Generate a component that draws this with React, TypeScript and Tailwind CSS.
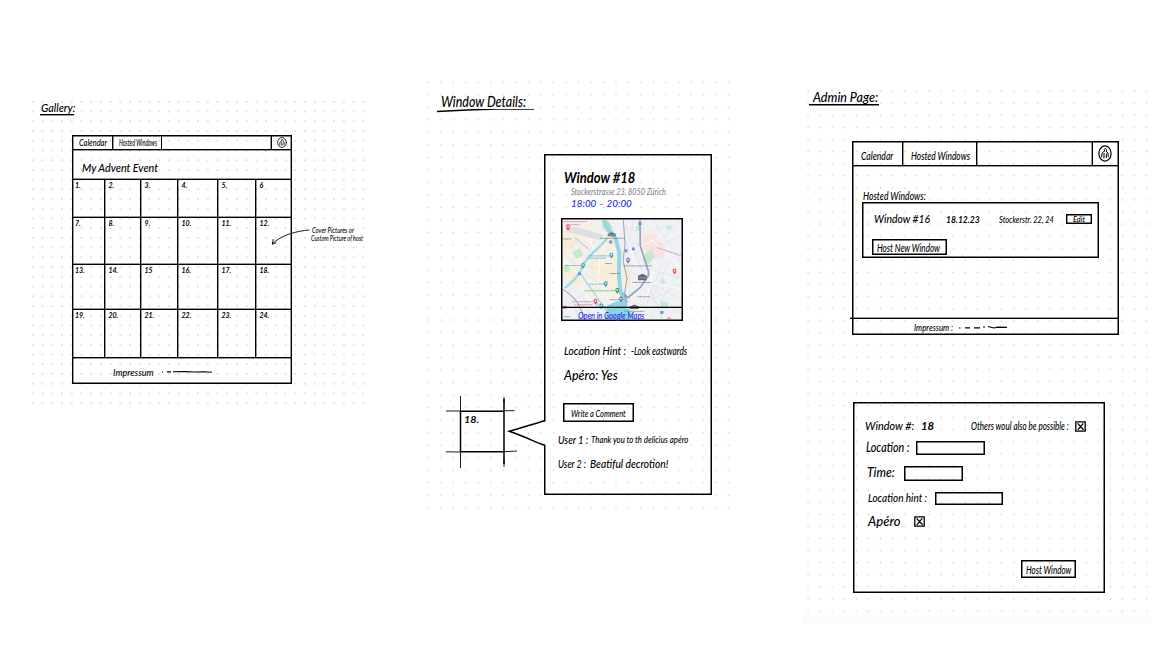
import { useLayoutEffect, useRef, type ReactNode } from "react";

/* One handwritten phrase, stretched to fill the width of its box. */
function Ink({ className, children }: { className: string; children: ReactNode }) {
  const box = useRef<HTMLSpanElement>(null);
  const text = useRef<HTMLSpanElement>(null);
  useLayoutEffect(() => {
    if (!box.current || !text.current) return;
    const ratio = box.current.clientWidth / text.current.offsetWidth;
    text.current.style.transform = `scaleX(${ratio})`;
  }, []);
  return (
    <span ref={box} className={`block shrink-0 whitespace-nowrap leading-none ${className}`}>
      <span ref={text} className="inline-block origin-left align-top">
        {children}
      </span>
    </span>
  );
}

function Avatar({ className }: { className: string }) {
  return (
    <svg viewBox="0 0 14 17" preserveAspectRatio="none" className={className} fill="none" stroke="#000" strokeWidth="1.2" strokeLinecap="round">
      <ellipse cx="7" cy="8.5" rx="6.1" ry="7.6" />
      <path d="M3.7 11.8 4 8.2 5.6 6.8 6.4 6.6V4.4L7.4 3.2 8.5 4.4V6.8L10 8 10.2 11.5M6 8.4V13M8.4 9V12.6" strokeWidth="1" />
    </svg>
  );
}

function Checked({ className }: { className: string }) {
  return (
    <svg viewBox="0 0 11 11" className={className} fill="none" stroke="#000" strokeWidth="1.3">
      <path d="M.8.9H10.2V10.1H.8ZM2.6 2.4 8.6 8.8M8.3 2.3 2.8 8.8" />
    </svg>
  );
}

const days = [
  ["1.", "2.", "3.", "4.", "5.", "6"],
  ["7.", "8.", "9.", "10.", "11.", "12."],
  ["13.", "14.", "15", "16.", "17.", "18."],
  ["19.", "20.", "21.", "22.", "23.", "24."],
];

function Gallery() {
  return (
    <section className="relative ml-[28px] mt-[97px] h-[309px] w-[341px] shrink-0 bg-[radial-gradient(circle,#d2d2d2_0.5px,transparent_1px)] bg-[size:9.73px_9.73px] pl-[12px] pt-[4px]">
      <h2 className="h-[14px] w-[34px] border-b border-black shadow-[0_0.4px_0_#000]">
        <Ink className="ml-px w-[34px] pt-px text-[12px]">Gallery:</Ink>
      </h2>
      <div className="ml-[32px] mt-[20px] flex h-[249px] w-[220px] flex-col border border-black shadow-[inset_0_0_0_0.4px_#000]">
        <header className="flex h-[14px] shrink-0 items-stretch border-b border-black text-[8.5px] shadow-[0_0.4px_0_#000]">
          <div className="flex w-[40px] items-center border-r border-black pl-[6px] pt-px shadow-[0.4px_0_0_#000]">
            <Ink className="w-[28px]">Calendar</Ink>
          </div>
          <div className="flex w-[49px] items-center border-r border-black pl-[6px] pt-px">
            <Ink className="w-[38px]">Hosted Windows</Ink>
          </div>
          <div className="flex-1" />
          <div className="flex w-[20px] items-center justify-center border-l border-black shadow-[-0.4px_0_0_#000]">
            <Avatar className="h-[11px] w-[10px]" />
          </div>
        </header>
        <div className="flex h-[29px] shrink-0 items-center pl-[9px] pt-[7px]">
          <Ink className="w-[76px] text-[12px]">My Advent Event</Ink>
        </div>
        <div className="grid h-[179px] shrink-0 grid-cols-[32px_36px_37px_40px_38px_35px] grid-rows-[38px_47px_45px_48px] border-b border-black shadow-[0_0.4px_0_#000]">
          {days.flatMap((week, r) =>
            week.map((day, c) => (
              <div
                key={day}
                className={`border-t border-black pt-[2px] text-[7px] font-bold leading-none shadow-[0.4px_-0.4px_0_#000] ${c < 5 ? "border-r" : ""} ${c === 0 ? "pl-[2px]" : "pl-[3.5px]"}`}
              >
                {day}
              </div>
            )),
          )}
        </div>
        <footer className="flex flex-1 items-center pl-[40px] pt-[3px]">
          <Ink className="w-[41px] text-[9px]">Impressum</Ink>
          <svg className="ml-[8px] h-[4px] w-[51px]" viewBox="0 0 51 4" fill="none" stroke="#000" strokeWidth="1.1">
            <path d="M0 2.3h1M5 1.9h4M11 1.8 23 1.6 33 2 42 1.7 50 2.2" />
          </svg>
        </footer>
      </div>
      <div className="absolute left-[283px] top-[130px] text-[7.5px]">
        <Ink className="ml-[1px] w-[42px]">Cover Pictures or</Ink>
        <Ink className="w-[52px]">Custom Picture of host</Ink>
      </div>
      <svg className="absolute left-[243px] top-[131px] h-[18px] w-[40px]" viewBox="0 0 40 18" fill="none" stroke="#000" strokeWidth=".9" strokeLinecap="round">
        <path d="M38 2C26 3 10 7 1.6 15.6M2.2 11.5 1.3 16.2 5 14.8" />
      </svg>
    </section>
  );
}

function CityMap() {
  return (
    <svg viewBox="57 47 348 298" preserveAspectRatio="none" className="h-full w-full" fill="none">
      <rect x="57" y="47" width="348" height="298" fill="#f0f1f5" />
      <path d="M57 47h122l40 60 4 180-90 0-76-100Z" fill="#f4f1ea" />
      <path d="M57 82 84 74 120 95 57 150ZM170 170 218 152 217 245 180 232ZM128 178 166 165 190 220 150 230ZM57 180 92 190 110 232 88 250 57 216ZM232 180 262 198 258 248 236 254ZM180 105 214 98 216 128 184 132Z" fill="#f9efd8" />
      <path d="M66 71 100 68 178 92 168 108 66 82Z" fill="#dedfe3" />
      <path d="M295 95 330 88 362 140 350 164 318 158 288 128Z" fill="#fae3df" />
      <path d="M177 50 205 76 200 92 172 72ZM84 144 106 132 118 152 96 164ZM299 146 320 136 328 158 306 184 292 170ZM269 68 284 62 290 74 276 80ZM362 66 376 64 378 74 364 76ZM345 230 352 222 360 236 350 242ZM346 290 368 296 364 316 342 308ZM58 188 72 180 78 198 62 206ZM155 290 170 302 152 310Z" fill="#c4e9ce" />
      <g stroke="#d3d7e0" strokeWidth="1.3">
        <path d="M57 110 140 170M70 100 156 146M57 145 126 210M98 100 74 142M145 50 110 88M200 130 130 190M120 210 202 258M60 230 140 305M70 300 155 250M90 330 190 230M110 180 210 212M150 110 120 180M104 345 75 260M140 345 118 280" />
        <path d="M245 48 256 345M265 50 240 165M300 50 268 170M325 50 405 170M230 110 405 150M242 180 405 220M252 200 405 285M290 250 375 345M350 180 285 345M405 200 310 345M380 155 320 280M302 230 405 330M260 120 350 345M260 320 405 240M330 130 405 95M400 50 350 105M315 80 380 60M230 70 280 80" />
      </g>
      <g stroke="#fff" strokeWidth="2.4">
        <path d="M57 165 125 230 190 250M132 100 166 170 160 250M110 245 155 310M275 225 405 255M310 100 405 190M330 170 290 340M248 150 345 95M245 100 275 190" />
      </g>
      <path d="M176 47 193 80 213 104 223 145 222 210 226 260 240 300" stroke="#93d6e5" strokeWidth="12" />
      <path d="M182 48 198 72" stroke="#a9dfc1" strokeWidth="10" />
      <path d="M188 100C168 132 132 148 116 185S88 230 62 252" stroke="#9ddae7" strokeWidth="7" />
      <path d="M110 210 130 240 180 312 195 345" stroke="#a4dce8" strokeWidth="4" />
      <path d="M214 292 240 290 268 345H180L188 304Z" fill="#8ed3e5" />
      <path d="M284 47 285 125 309 202 309 214 285 250 248 281 236 266 246 296" stroke="#97a5bf" strokeWidth="5" />
      <path d="M235 48 240 120 234 168 246 224 238 270M57 256C98 282 110 308 119 345" stroke="#9aa8c1" strokeWidth="3.2" />
      <path d="M335 130 405 155M92 100 132 134" stroke="#8b8f99" strokeWidth="2" strokeDasharray="6 2" />
      <g strokeWidth="2.6" strokeDasharray="5 1 8 1 3 1" opacity=".8">
        <path d="M59 52H128M66 61H106M84 293H145M92 302H146" stroke="#e07090" />
        <path d="M132 155H194M132 162H184M62 184H110M135 240H178" stroke="#4fa9b5" />
        <path d="M120 260H212" stroke="#62ad76" />
        <path d="M165 102H240M235 185H320M262 235H320M196 208H226M181 178H202M277 278H315M58 104H81M60 338H80M195 287H232M238 322H298" stroke="#717782" />
      </g>
      {[
        [72, 70, "#e63b78"], [153, 293, "#e63b78"], [200, 154, "#2b9dac"], [116, 185, "#2b9dac"],
        [183, 240, "#2b9dac"], [170, 307, "#2b9dac"], [217, 260, "#37964a"], [249, 169, "#66788a"],
        [228, 286, "#66788a"], [386, 202, "#e7473d"],
      ].map(([x, y, color]) => (
        <g key={`${x}-${y}`} transform={`translate(${x} ${y})`}>
          <path d="M0 8C-4 3-5 0-5-3A5 5 0 0 1 5-3C5 0 4 3 0 8Z" fill={String(color)} stroke={String(color)} strokeWidth="1.2" />
          <circle cy="-2.5" r="2.6" fill="#fff" />
        </g>
      ))}
      <path d="M193 109h9v9h-9ZM238 135h9v9h-9ZM260 130h9v9h-9ZM279 54h10v9h-10ZM101 204h9v9h-9ZM344 321h9v9h-9Z" fill="#6f94e2" />
      <path d="M189 96V89L201 84 213 89V96ZM278 228V215L291 209 304 215V228ZM255 315V307L268 301 280 307V315Z" fill="#666a73" />
      <path d="M190 92H212M280 221H302" stroke="#c4c7cc" strokeWidth="1.6" />
      <path d="M57 305h11v9H57ZM365 341h10v4h-10Z" fill="#ee7398" />
    </svg>
  );
}

function WindowDetails() {
  return (
    <section className="relative ml-[53px] mt-[76px] h-[438px] w-[313px] shrink-0 bg-[radial-gradient(circle,#d2d2d2_0.6px,transparent_1.1px)] bg-[size:12.53px_12.53px] pl-[15px] pt-[18px]">
      <h2>
        <Ink className="ml-[4px] w-[85px] text-[15px]">Window Details:</Ink>
        <svg viewBox="0 0 97 5" className="block h-[5px] w-[97px]" fill="none" stroke="#000" strokeWidth="1.5">
          <path d="M0 3.2 30 1.8 60 .9 97 .8" transform="translate(0 -.8)" />
        </svg>
      </h2>
      <div className="ml-[107px] mt-[40px] flex h-[341px] w-[168px] flex-col border border-black pl-[13px] shadow-[inset_0_0_0_0.5px_#000]">
        <Ink className="ml-[6px] mt-[15px] w-[71px] text-[15px] font-bold">Window #18</Ink>
        <Ink className="ml-[13px] mt-[2px] w-[95px] text-[9px] text-[#858585]">Stockerstrasse 23, 8050 Zürich</Ink>
        <Ink className="ml-[13px] mt-[2px] w-[61px] text-[10px] text-[#2528e8]">18:00 – 20:00</Ink>
        <div className="relative ml-[3px] mt-[10px] h-[103px] w-[122px] shrink-0 border border-black p-px shadow-[inset_0_0_0_0.5px_#000]">
          <CityMap />
          <div className="absolute inset-x-0 bottom-0 h-[13px] border-t border-black pl-[16px] pt-[2px] shadow-[0_-0.3px_0_#000]">
            <Ink className="w-[66px] text-[10px]  text-[#2024f5]">Open in Google Maps</Ink>
          </div>
        </div>
        <div className="ml-[6px] mt-[24px] flex items-center gap-[5px]">
          <Ink className="w-[62px] text-[12px]">Location Hint :</Ink>
          <Ink className="w-[56px] text-[10.5px]">-Look eastwards</Ink>
        </div>
        <Ink className="ml-[6px] mt-[13px] w-[54px] text-[12.5px]">Apéro: Yes</Ink>
        <div className="ml-[5px] mt-[20px] flex h-[19px] w-[71px] shrink-0 items-center border border-black pl-[7px] pt-px shadow-[inset_0_0_0_0.5px_#000]">
          <Ink className="w-[55px] text-[10px]">Write a Comment</Ink>
        </div>
        <div className="mt-[13px] flex items-center gap-[3px]">
          <Ink className="w-[30px] text-[10.5px]">User 1 :</Ink>
          <Ink className="w-[97px] text-[9.5px]">Thank you to th delicius apéro</Ink>
        </div>
        <div className="mt-[13px] flex items-center gap-[4px]">
          <Ink className="w-[28px] text-[11px]">User 2 :</Ink>
          <Ink className="w-[78px] text-[11.5px]">Beatiful decrotion!</Ink>
        </div>
      </div>
      {/* Calendar cell with the pointer that joins it to the details card */}
      <svg viewBox="446 396 102 73" className="absolute left-[24px] top-[320px] h-[73px] w-[102px]" fill="none" stroke="#000" strokeWidth="1.5">
        <path d="M543.5 421.5H547V445H543.5Z" fill="#fff" stroke="none" />
        <path d="M545 420.5C531 425 520 428 509.3 431.2 527 437 536 443 545 445.2" />
        <path d="M460.5 411V452M504 399V464M460.5 411.2H504M460.5 451.8H504" />
        <path d="M460.5 396V411M460.5 452V468M504 397V403M504 459V467M446 411H461M504 410.7H514.5M446 451.8 461 452M504 451.7 517 451" strokeWidth=".9" />
      </svg>
      <Ink className="absolute left-[42px] top-[338px] w-[15px] text-[10px] font-bold">18.</Ink>
    </section>
  );
}

function AdminPage() {
  return (
    <section className="ml-[67px] mt-[85px] h-[538px] w-[349px] shrink-0 bg-[linear-gradient(to_bottom,transparent_524px,#fafafa_538px),radial-gradient(circle,#d2d2d2_0.6px,transparent_1.1px)] bg-[size:100%_100%,12.1px_12.1px] pl-[7px] pt-[5px]">
      <h2 className="h-[15px] w-[70px] border-b border-black shadow-[0_0.5px_0_#000]">
        <Ink className="-mr-px ml-[4px] w-[65px] pt-px text-[13.5px]">Admin Page:</Ink>
      </h2>
      <div className="ml-[43px] mt-[36px] flex h-[194px] w-[267px] flex-col border border-black shadow-[inset_0_0_0_0.5px_#000]">
        <header className="flex h-[24px] shrink-0 border-b border-black text-[11px] shadow-[0_0.4px_0_#000]">
          <div className="flex w-[50px] items-center border-r border-black pl-[8px] pt-[4px] shadow-[0.4px_0_0_#000]">
            <Ink className="w-[32px]">Calendar</Ink>
          </div>
          <div className="flex w-[74px] items-center border-r border-black pl-[8px] pt-[4px] shadow-[0.4px_0_0_#000]">
            <Ink className="w-[59px]">Hosted Windows</Ink>
          </div>
          <div className="flex-1" />
          <div className="flex w-[26px] items-center justify-center border-l border-black pr-px shadow-[-0.4px_0_0_#000]">
            <Avatar className="h-[17px] w-[14px]" />
          </div>
        </header>
        <Ink className="ml-[10px] mt-[24px] w-[63px] text-[11px]">Hosted Windows:</Ink>
        <div className="ml-[9px] mt-px h-[56px] w-[237px] shrink-0 border border-black shadow-[inset_0_0_0_0.5px_#000]">
          <div className="flex items-center pl-[11px] pt-[10px]">
            <Ink className="w-[56px] text-[11.5px]">Window #16</Ink>
            <Ink className="ml-[16px] w-[34px] text-[10px] font-bold">18.12.23</Ink>
            <Ink className="ml-[19px] w-[55px] text-[10px]">Stockerstr. 22, 24</Ink>
            <div className="ml-[12px] flex h-[10px] w-[26px] items-center justify-center border border-black shadow-[inset_0_0_0_0.4px_#000]">
              <Ink className="w-[12px] text-[8px]">Edit</Ink>
            </div>
          </div>
          <div className="ml-[9px] mt-[14px] flex h-[16px] w-[75px] items-center border border-black pl-[4px] pt-px shadow-[inset_0_0_0_0.5px_#000]">
            <Ink className="w-[63px] text-[11px]">Host New Window</Ink>
          </div>
        </div>
        <footer className="-ml-[3px] mt-auto flex h-[16px] items-center border-t border-black pl-[64px] pt-px shadow-[0_-0.4px_0_#000]">
          <Ink className="w-[39px] text-[9px]">Impressum :</Ink>
          <svg viewBox="0 0 50 5" className="ml-[5px] h-[5px] w-[50px]" fill="none" stroke="#000" strokeWidth="1.2">
            <path d="M1 3h1.5M7 2.8h5M16 2.8h6M25 2h2M30 1.5 36 3 40 2.2 49 2.3" />
          </svg>
        </footer>
      </div>
      <div className="ml-[44px] mt-[67px] h-[191px] w-[252px] border border-black pl-[11px] shadow-[inset_0_0_0_0.5px_#000]">
        <div className="flex h-[34px] items-end">
          <div className="flex h-[22px] items-center">
            <Ink className="w-[49px] text-[11.5px]">Window #:</Ink>
            <Ink className="ml-[7px] w-[13px] text-[10.5px] font-bold">18</Ink>
            <Ink className="ml-[37px] w-[98px] text-[10.5px]">Others woul also be possible :</Ink>
            <Checked className="ml-[6px] h-[11px] w-[11px]" />
          </div>
        </div>
        <div className="flex h-[22px] items-center">
          <Ink className="ml-px w-[43px] text-[12.5px]">Location :</Ink>
          <div className="ml-[7px] h-[14px] w-[69px] border border-black shadow-[inset_0_0_0_0.5px_#000]" />
        </div>
        <div className="mt-[2px] flex h-[24px] items-center">
          <Ink className="ml-[2px] w-[28px] text-[12.5px]">Time:</Ink>
          <div className="ml-[9px] h-[15px] w-[59px] border border-black shadow-[inset_0_0_0_0.5px_#000]" />
        </div>
        <div className="mt-px flex h-[24px] items-center">
          <Ink className="ml-[3px] w-[59px] text-[11.5px]">Location hint :</Ink>
          <div className="ml-[8px] h-[13px] w-[68px] border border-black shadow-[inset_0_0_0_0.5px_#000]" />
        </div>
        <div className="flex h-[23px] items-center">
          <Ink className="ml-[3px] w-[32px] text-[13px]">Apéro</Ink>
          <Checked className="ml-[14px] h-[11px] w-[11px]" />
        </div>
        <div className="ml-[156px] mt-[27px] flex h-[18px] w-[55px] items-center border border-black pl-[4px] pt-px shadow-[inset_0_0_0_0.5px_#000]">
          <Ink className="w-[45px] text-[11.5px]">Host Window</Ink>
        </div>
      </div>
    </section>
  );
}

export default function App() {
  return (
    <main className="flex h-[664px] w-[1176px] items-start overflow-hidden bg-white font-['Lato',sans-serif] font-medium italic text-black">
      <Gallery />
      <WindowDetails />
      <AdminPage />
    </main>
  );
}
